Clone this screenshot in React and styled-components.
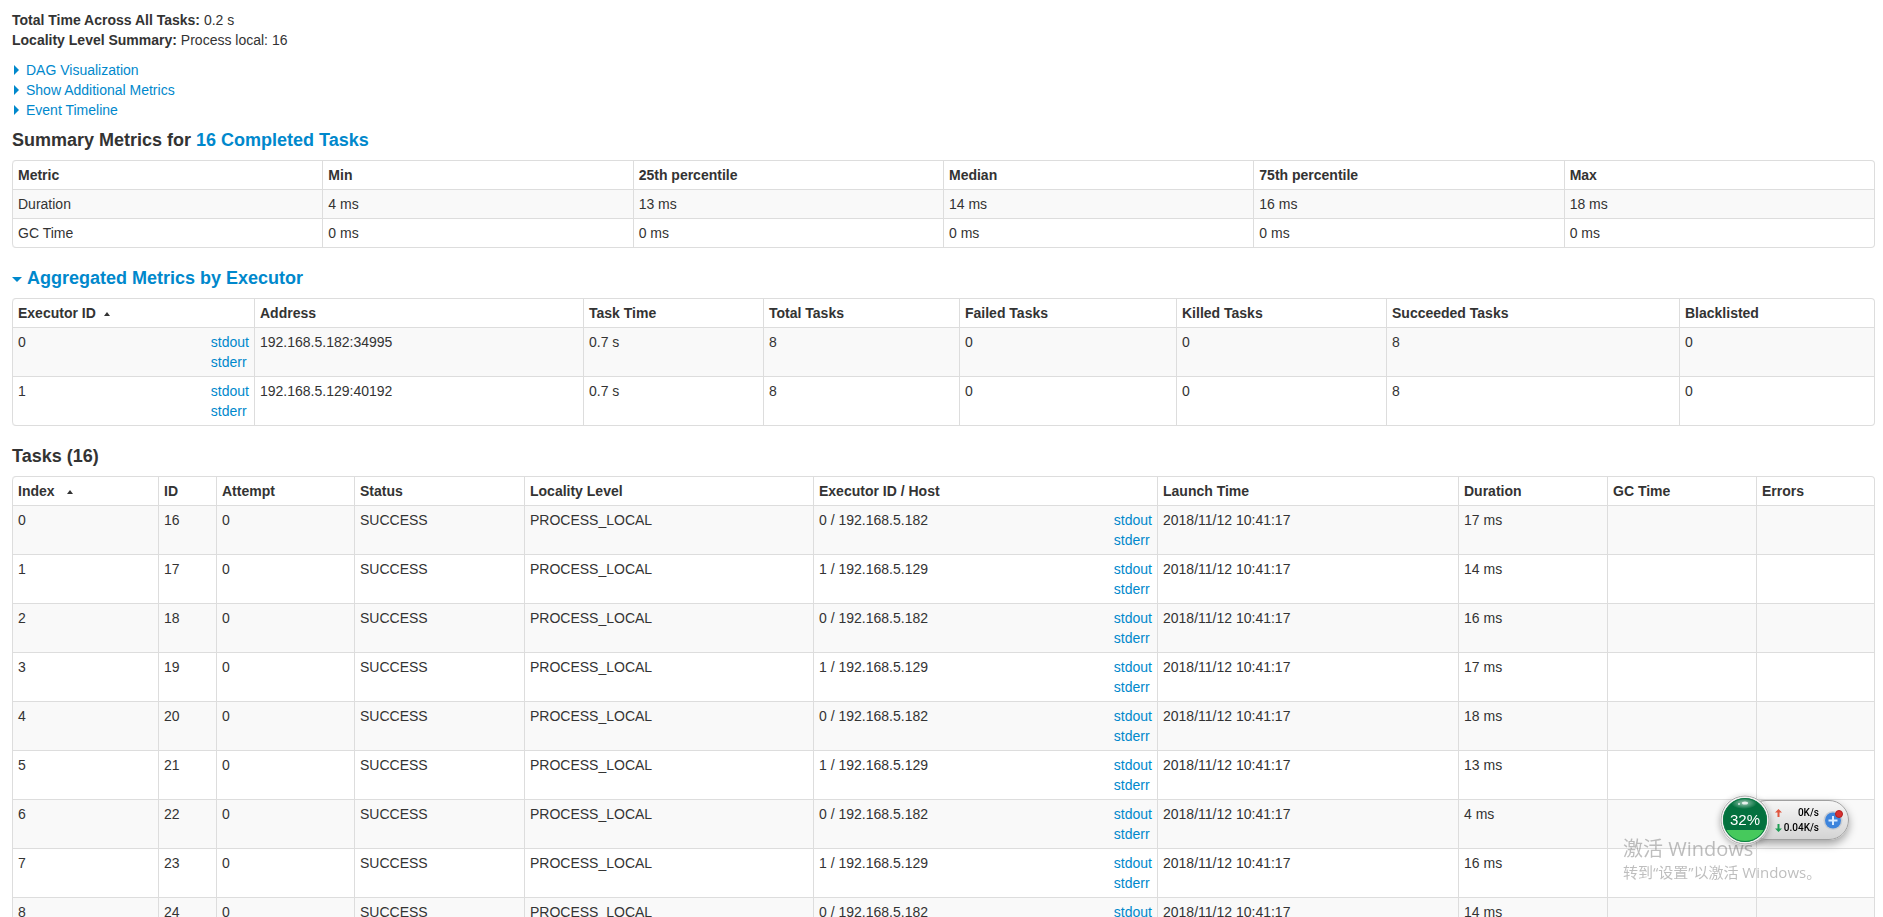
import React from "react";
import styled, { createGlobalStyle, css } from "styled-components";

const GlobalStyle = createGlobalStyle`
  body {
    margin: 0;
    background: #fff;
    color: #333;
    font-family: "Liberation Sans", Arial, sans-serif;
    font-size: 14px;
    line-height: 20px;
  }
`;

const Page = styled.main`
  box-sizing: border-box;
  height: 100vh;
  padding: 10px 8px 0 12px;
  overflow-y: auto;
  scrollbar-width: none;
`;

const PlainList = styled.ul`
  list-style: none;
  margin: 0 0 10px;
  padding: 0;
`;

const Link = styled.a`
  color: #0088cc;
  text-decoration: none;
  &:hover {
    color: #005580;
    text-decoration: underline;
  }
`;

const Toggle = styled.button`
  display: block;
  border: 0;
  margin: 0;
  padding: 0;
  background: none;
  color: #0088cc;
  font: inherit;
  cursor: pointer;
`;

const Arrow = styled.span`
  display: inline-block;
  width: 0;
  height: 0;
  border: 5px solid transparent;
  ${(p) =>
    p.$open
      ? css`
          border-top-color: #0088cc;
          border-bottom: 0;
          vertical-align: 2px;
          margin-right: 5px;
        `
      : css`
          border-left-color: #0088cc;
          border-right: 0;
          margin: 0 7px 0 2px;
        `}
`;

const Heading = styled.h4`
  margin: 0 0 10px;
  font-size: 18px;
  font-weight: bold;
  line-height: 20px;
`;

const Table = styled.table`
  width: 100%;
  table-layout: fixed;
  border: 1px solid #ddd;
  border-left: 0;
  border-radius: 4px;
  border-collapse: separate;
  border-spacing: 0;
  margin-bottom: 20px;

  th,
  td {
    padding: 4px 5px;
    border-left: 1px solid #ddd;
    text-align: left;
    vertical-align: top;
  }
  td {
    border-top: 1px solid #ddd;
  }
  th:first-child {
    border-top-left-radius: 4px;
  }
  tr:last-child td:first-child {
    border-bottom-left-radius: 4px;
  }
  tbody tr:nth-child(odd) td {
    background: #f9f9f9;
  }
`;

const SortMark = styled.span`
  display: inline-block;
  border: 3px solid transparent;
  border-top: 0;
  border-bottom: 4px solid #333;
  margin-left: ${(p) => p.$gap}px;
  vertical-align: 2px;
`;

const WithLogs = styled.div`
  display: flex;
  justify-content: space-between;
`;

const Logs = styled.div`
  display: flex;
  flex-direction: column;
`;

const Watermark = styled.aside`
  position: fixed;
  right: 60px;
  bottom: 34px;
  width: 200px;
  color: rgba(120, 120, 120, 0.48);
  font-family: "Open Sans", "Noto Sans CJK SC", sans-serif;
  font-size: 15px;
  line-height: 22px;
  white-space: nowrap;
  pointer-events: none;
`;

const WatermarkTitle = styled.div`
  font-size: 20px;
  line-height: 24px;
`;

const Monitor = styled.aside`
  position: fixed;
  right: 34px;
  bottom: 72px;
  display: flex;
  align-items: center;
`;

const Gauge = styled.div`
  z-index: 1;
  display: grid;
  margin-right: -24px;
  place-items: center;
  border-radius: 50%;
  box-shadow: 0 2px 6px rgba(0, 0, 0, 0.3);
  color: #fff;
  font-size: 15px;
  > * {
    grid-area: 1 / 1;
  }
  svg {
    display: block;
  }
  span {
    z-index: 1;
  }
`;

const Pill = styled.div`
  box-sizing: border-box;
  display: flex;
  align-items: center;
  gap: 4px;
  height: 40px;
  padding: 0 5px 0 28px;
  border: 1px solid #a0a0a0;
  border-radius: 20px;
  background: linear-gradient(#f6f6f6, #d4d4d4);
  box-shadow: 0 4px 8px rgba(0, 0, 0, 0.35);
`;

const Speeds = styled.div`
  display: grid;
  grid-template-columns: 8px 36px;
  align-items: center;
  color: #000;
  font-family: Roboto, sans-serif;
  font-size: 10px;
  font-weight: 500;
  line-height: 15px;
  text-align: right;
`;

const AddButton = styled.button`
  border: 0;
  padding: 0;
  background: none;
  svg {
    display: block;
  }
`;

const summaryRows = [
  ["Duration", "4 ms", "13 ms", "14 ms", "16 ms", "18 ms"],
  ["GC Time", "0 ms", "0 ms", "0 ms", "0 ms", "0 ms"],
];

const executors = [
  { id: 0, address: "192.168.5.182:34995" },
  { id: 1, address: "192.168.5.129:40192" },
];

const hosts = ["192.168.5.182", "192.168.5.129"];
const durations = [17, 14, 16, 17, 18, 13, 4, 16, 14];

const summaryColumns = ["Metric", "Min", "25th percentile", "Median", "75th percentile", "Max"].map(
  (label) => ({ label, width: 310 })
);

const executorColumns = [
  { label: "Executor ID", width: 242, sortGap: 8 },
  { label: "Address", width: 329 },
  { label: "Task Time", width: 180 },
  { label: "Total Tasks", width: 196 },
  { label: "Failed Tasks", width: 217 },
  { label: "Killed Tasks", width: 210 },
  { label: "Succeeded Tasks", width: 293 },
  { label: "Blacklisted", width: 195 },
];

const taskColumns = [
  { label: "Index", width: 146, sortGap: 12 },
  { label: "ID", width: 58 },
  { label: "Attempt", width: 138 },
  { label: "Status", width: 170 },
  { label: "Locality Level", width: 289 },
  { label: "Executor ID / Host", width: 344 },
  { label: "Launch Time", width: 301 },
  { label: "Duration", width: 149 },
  { label: "GC Time", width: 149 },
  { label: "Errors", width: 118 },
];

function DataTable({ columns, children }) {
  return (
    <Table>
      <colgroup>
        {columns.map((c) => (
          <col key={c.label} width={c.width} />
        ))}
      </colgroup>
      <thead>
        <tr>
          {columns.map((c) => (
            <th key={c.label} scope="col">
              {c.label}
              {c.sortGap && <SortMark $gap={c.sortGap} />}
            </th>
          ))}
        </tr>
      </thead>
      <tbody>{children}</tbody>
    </Table>
  );
}

function LogCell({ children }) {
  return (
    <td>
      <WithLogs>
        <span>{children}</span>
        <Logs>
          <Link href="#stdout">stdout</Link>
          <Link href="#stderr">stderr</Link>
        </Logs>
      </WithLogs>
    </td>
  );
}

function SpeedArrow({ up }) {
  return (
    <svg width="7" height="8" viewBox="0 0 7 8" aria-hidden="true">
      <path
        d={up ? "M3.5 0 7 3.5H4.5V8h-2V3.5H0z" : "M3.5 8 7 4.5H4.5V0h-2v4.5H0z"}
        fill={up ? "#e0563f" : "#1f9d55"}
      />
    </svg>
  );
}

function NetworkMonitor() {
  return (
    <Monitor>
      <Gauge>
        <svg width="50" height="50" viewBox="0 0 50 50" aria-hidden="true">
          <defs>
            <clipPath id="ball">
              <circle cx="25" cy="25" r="22" />
            </clipPath>
            <radialGradient id="shine">
              <stop offset="0" stopColor="#fff" stopOpacity="0.6" />
              <stop offset="1" stopColor="#fff" stopOpacity="0" />
            </radialGradient>
          </defs>
          <circle cx="25" cy="25" r="24" fill="#f2f2f2" stroke="#a6a6a6" />
          <g clipPath="url(#ball)">
            <rect width="50" height="50" fill="#04713f" />
            <rect y="35" width="50" height="15" fill="#46c95c" />
            <ellipse cx="24" cy="8" rx="13" ry="6" fill="url(#shine)" />
            <ellipse cx="25" cy="8" rx="3" ry="1.5" fill="#fff" opacity="0.8" />
            <circle cx="19" cy="9" r="1" fill="#fff" opacity="0.8" />
          </g>
          <circle cx="25" cy="25" r="21.5" fill="none" stroke="#0b7a45" />
        </svg>
        <span>32%</span>
      </Gauge>
      <Pill>
        <Speeds>
          <SpeedArrow up />
          <span>0K/s</span>
          <SpeedArrow />
          <span>0.04K/s</span>
        </Speeds>
        <AddButton type="button" aria-label="Boost">
          <svg width="20" height="20" viewBox="0 0 20 20" aria-hidden="true">
            <circle cx="10" cy="10.5" r="9.5" fill="#c9cdd2" />
            <circle cx="10" cy="10.5" r="8" fill="#3d84dc" />
            <path d="M10 6v9M5.5 10.5h9" stroke="#d9ecff" strokeWidth="2" />
            <circle cx="16" cy="4" r="3.5" fill="#d93030" stroke="#b02020" />
          </svg>
        </AddButton>
      </Pill>
    </Monitor>
  );
}

export default function App() {
  return (
    <>
      <GlobalStyle />
      <Page>
        <PlainList>
          <li>
            <strong>Total Time Across All Tasks:</strong> 0.2 s
          </li>
          <li>
            <strong>Locality Level Summary:</strong> Process local: 16
          </li>
        </PlainList>
        <PlainList>
          {["DAG Visualization", "Show Additional Metrics", "Event Timeline"].map((label) => (
            <li key={label}>
              <Toggle type="button">
                <Arrow />
                {label}
              </Toggle>
            </li>
          ))}
        </PlainList>

        <Heading>
          Summary Metrics for <Link href="#tasks">16 Completed Tasks</Link>
        </Heading>
        <DataTable columns={summaryColumns}>
          {summaryRows.map((row) => (
            <tr key={row[0]}>
              {row.map((value, i) => (
                <td key={i}>{value}</td>
              ))}
            </tr>
          ))}
        </DataTable>

        <Heading>
          <Toggle type="button" aria-expanded="true">
            <Arrow $open />
            Aggregated Metrics by Executor
          </Toggle>
        </Heading>
        <DataTable columns={executorColumns}>
          {executors.map(({ id, address }) => (
            <tr key={id}>
              <LogCell>{id}</LogCell>
              <td>{address}</td>
              <td>0.7 s</td>
              <td>8</td>
              <td>0</td>
              <td>0</td>
              <td>8</td>
              <td>0</td>
            </tr>
          ))}
        </DataTable>

        <Heading id="tasks">Tasks (16)</Heading>
        <DataTable columns={taskColumns}>
          {durations.map((ms, i) => (
            <tr key={i}>
              <td>{i}</td>
              <td>{16 + i}</td>
              <td>0</td>
              <td>SUCCESS</td>
              <td>PROCESS_LOCAL</td>
              <LogCell>
                {i % 2} / {hosts[i % 2]}
              </LogCell>
              <td>2018/11/12 10:41:17</td>
              <td>{ms} ms</td>
              <td />
              <td />
            </tr>
          ))}
        </DataTable>
      </Page>
      <Watermark>
        <WatermarkTitle>激活 Windows</WatermarkTitle>
        转到“设置”以激活 Windows。
      </Watermark>
      <NetworkMonitor />
    </>
  );
}
